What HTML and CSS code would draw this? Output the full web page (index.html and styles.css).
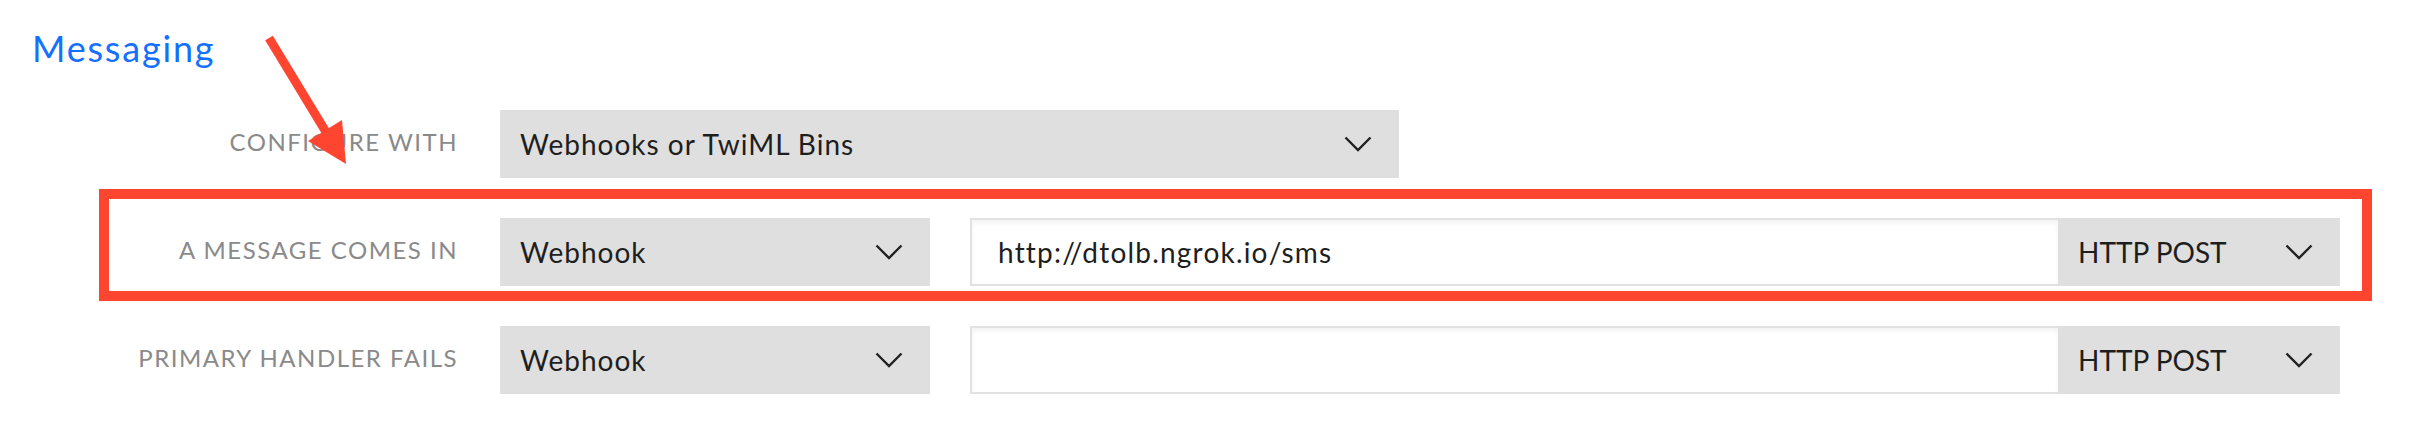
FILE: index.html
```html
<!DOCTYPE html>
<html lang="en">
<head>
<meta charset="utf-8">
<title>Messaging</title>
<link rel="stylesheet" href="styles.css">
</head>
<body>
<section class="section">
  <h2 class="title">Messaging</h2>
  <div class="rows">
    <div class="row">
      <div class="label">Configure with</div>
      <div class="select wide"><span class="value">Webhooks or TwiML Bins</span>
        <svg class="chev" viewBox="0 0 28 16" width="28" height="16"><polyline points="1.5,1.5 14,14 26.5,1.5"/></svg>
      </div>
    </div>
    <div class="row">
      <div class="label">A message comes in</div>
      <div class="select narrow"><span class="value">Webhook</span>
        <svg class="chev" viewBox="0 0 28 16" width="28" height="16"><polyline points="1.5,1.5 14,14 26.5,1.5"/></svg>
      </div>
      <div class="url-group">
        <div class="input">http://dtolb.ngrok.io/sms</div>
        <div class="select method"><span>HTTP POST</span>
          <svg class="chev" viewBox="0 0 28 16" width="28" height="16"><polyline points="1.5,1.5 14,14 26.5,1.5"/></svg>
        </div>
      </div>
    </div>
    <div class="row">
      <div class="label">Primary handler fails</div>
      <div class="select narrow"><span class="value">Webhook</span>
        <svg class="chev" viewBox="0 0 28 16" width="28" height="16"><polyline points="1.5,1.5 14,14 26.5,1.5"/></svg>
      </div>
      <div class="url-group">
        <div class="input"></div>
        <div class="select method"><span>HTTP POST</span>
          <svg class="chev" viewBox="0 0 28 16" width="28" height="16"><polyline points="1.5,1.5 14,14 26.5,1.5"/></svg>
        </div>
      </div>
    </div>
  </div>
  <div class="highlight"></div>
  <svg class="arrow" width="120" height="150" viewBox="0 0 120 150">
    <line x1="9" y1="4" x2="66" y2="98"/>
    <polygon points="48,107 82,86 86,130"/>
  </svg>
</section>
</body>
</html>
```
FILE: styles.css
```css
html, body {
  margin: 0;
  padding: 0;
  background: #ffffff;
}

body {
  font-family: Lato, "Open Sans", sans-serif;
  color: #222222;
}

.section {
  position: relative;
  padding: 27px 0 0 32px;
}

.title {
  margin: 0 0 40px;
  font-size: 36px;
  line-height: 43px;
  font-weight: 400;
  letter-spacing: 1.8px;
  color: #1470ff;
}

.rows {
  display: flex;
  flex-direction: column;
  gap: 40px;
}

.row {
  display: flex;
  align-items: center;
  height: 68px;
}

.label {
  width: 426px;
  margin-right: 42px;
  padding-bottom: 6px;
  text-align: right;
  text-transform: uppercase;
  font-size: 24px;
  line-height: 29px;
  letter-spacing: 1.5px;
  color: #8a8a8a;
  white-space: nowrap;
}

.select {
  box-sizing: border-box;
  height: 68px;
  display: flex;
  align-items: center;
  justify-content: space-between;
  padding: 0 27px 0 20px;
  background: #dfdfdf;
  font-size: 28px;
  line-height: 34px;
  color: #1e1e1e;
}

.value {
  letter-spacing: 1px;
}

.select.wide {
  width: 899px;
}

.select.narrow {
  width: 430px;
}

.select.method {
  width: 282px;
  flex: none;
}

.chev {
  display: block;
  flex: none;
}

.chev polyline {
  fill: none;
  stroke: #222222;
  stroke-width: 2.4;
}

.url-group {
  display: flex;
  width: 1370px;
  margin-left: 40px;
}

.input {
  box-sizing: border-box;
  flex: 1;
  height: 68px;
  display: flex;
  align-items: center;
  padding-left: 26px;
  border: 2px solid #e1e1e1;
  border-right: none;
  box-shadow: inset 0 3px 4px rgba(0, 0, 0, 0.05);
  background: #ffffff;
  font-size: 28px;
  line-height: 34px;
  letter-spacing: 1.2px;
  color: #1e1e1e;
}

.highlight {
  position: absolute;
  left: 99px;
  top: 189px;
  width: 2273px;
  height: 112px;
  box-sizing: border-box;
  border: 10px solid #fe4530;
  pointer-events: none;
}

.arrow {
  position: absolute;
  left: 260px;
  top: 34px;
  overflow: visible;
}

.arrow line {
  stroke: #fe4530;
  stroke-width: 9;
}

.arrow polygon {
  fill: #fe4530;
}
```
